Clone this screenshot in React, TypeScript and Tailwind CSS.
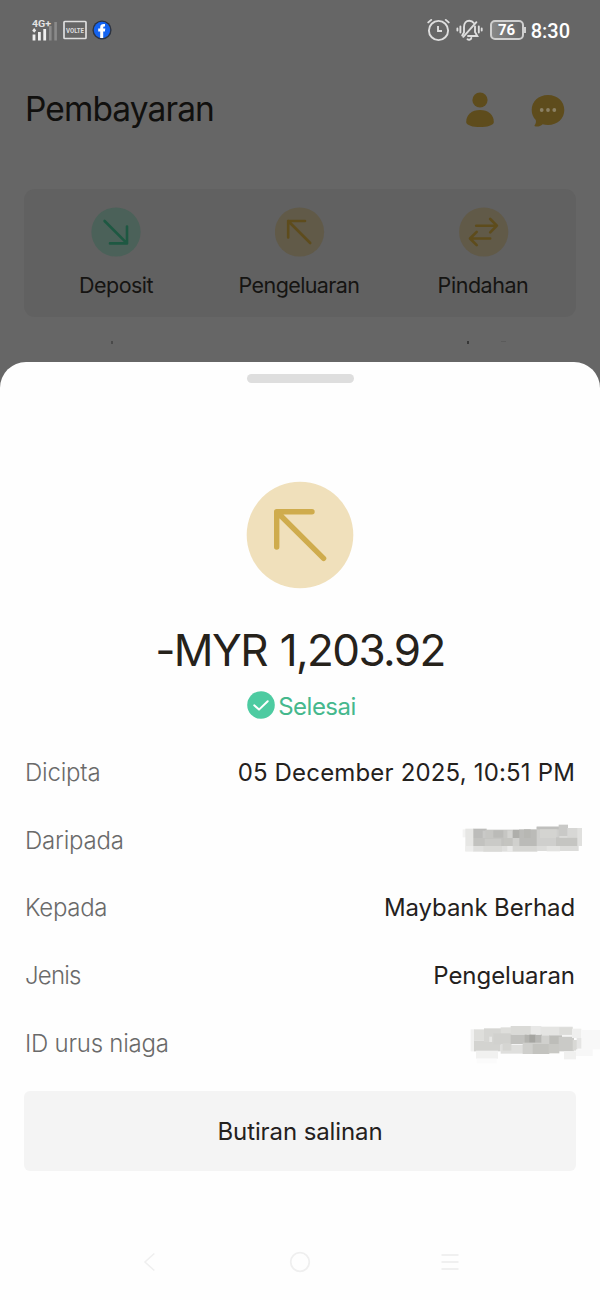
import React from 'react';

type Cell = [number, number, number, number, string];

interface MaskProps {
  cells: Cell[];
  height: number;
}

interface Detail {
  label: string;
  labelClass: string;
  value?: string;
  valueClass?: string;
  mask?: MaskProps;
}

// x, y, width, height, colour
const SENDER_CELLS: Cell[] = [
  [68, 58, 10, 24, '#f3f3f2'],
  [76, 56, 26, 68, '#e6e6e4'],
  [76, 108, 26, 16, '#ededec'],
  [100, 56, 40, 28, '#bcbcba'],
  [128, 62, 12, 22, '#c9c9c7'],
  [136, 59, 82, 26, '#c6c6c3'],
  [160, 61, 30, 22, '#bbbbb8'],
  [202, 61, 18, 24, '#d3d3d0'],
  [100, 84, 140, 24, '#c2c2bf'],
  [134, 86, 50, 22, '#cacac7'],
  [192, 84, 26, 24, '#c4c4c0'],
  [218, 84, 22, 24, '#d0d0cd'],
  [218, 59, 22, 25, '#afafab'],
  [238, 58, 54, 50, '#bbbbb8'],
  [252, 58, 20, 26, '#b7b7b3'],
  [100, 108, 118, 17, '#dfdfdd'],
  [130, 108, 56, 17, '#dadad7'],
  [202, 108, 16, 17, '#eaeae9'],
  [218, 108, 74, 17, '#d6d6d3'],
  [290, 50, 68, 60, '#cfcfcd'],
  [290, 50, 68, 8, '#bfbfbd'],
  [300, 58, 50, 26, '#d4d4d1'],
  [356, 44, 28, 36, '#c9c9c7'],
  [382, 54, 32, 28, '#d7d7d5'],
  [348, 82, 68, 26, '#c5c5c2'],
  [290, 108, 126, 15, '#dcdcda'],
  [320, 108, 40, 16, '#e3e3e1'],
  [412, 54, 14, 54, '#e0e0de'],
];

const ID_CELLS: Cell[] = [
  [92, 58, 12, 66, '#f1f1f0'],
  [102, 58, 32, 34, '#dededb'],
  [102, 92, 80, 32, '#d3d3d0'],
  [132, 55, 52, 42, '#d6d6d3'],
  [182, 52, 32, 26, '#dededb'],
  [148, 80, 8, 16, '#e8e8e6'],
  [160, 70, 54, 34, '#d1d1ce'],
  [212, 48, 62, 26, '#dadad7'],
  [272, 48, 32, 24, '#e8e8e7'],
  [302, 50, 96, 26, '#e4e4e2'],
  [358, 52, 40, 22, '#dcdcd9'],
  [182, 104, 90, 27, '#dfdfdd'],
  [188, 100, 26, 22, '#d5d5d2'],
  [212, 74, 48, 28, '#c1c1be'],
  [254, 74, 34, 26, '#b3b3af'],
  [268, 74, 18, 24, '#a5a5a1'],
  [286, 74, 20, 26, '#b7b7b4'],
  [304, 76, 26, 28, '#d0d0cd'],
  [328, 76, 38, 30, '#bdbdb9'],
  [248, 98, 58, 34, '#cfcfcc'],
  [278, 102, 50, 30, '#c3c3bf'],
  [326, 102, 32, 28, '#c8c8c4'],
  [356, 80, 46, 44, '#cacac7'],
  [398, 90, 14, 32, '#d8d8d5'],
  [396, 56, 28, 28, '#efefee'],
  [410, 84, 18, 32, '#e5e5e4'],
  [108, 122, 66, 24, '#f1f1f0'],
  [372, 124, 36, 24, '#f0f0ef'],
  [424, 60, 56, 58, '#f8f8f8'],
  [408, 118, 50, 20, '#f7f7f7'],
  [110, 146, 60, 14, '#fbfbfb'],
];

const DETAILS: Detail[] = [
  { label: 'Dicipta', labelClass: 'tracking-[-0.2px]', value: '05 December 2025, 10:51 PM', valueClass: 'tracking-[0.17px]' },
  { label: 'Daripada', labelClass: 'tracking-[-0.2px]', mask: { cells: SENDER_CELLS, height: 60 } },
  { label: 'Kepada', labelClass: 'tracking-[-0.3px]', value: 'Maybank Berhad', valueClass: 'tracking-[-0.1px]' },
  { label: 'Jenis', labelClass: 'tracking-[-0.8px]', value: 'Pengeluaran', valueClass: 'tracking-[-0.05px]' },
  { label: 'ID urus niaga', labelClass: 'tracking-[-0.25px]', mask: { cells: ID_CELLS, height: 66 } },
];

const Mask: React.FC<MaskProps> = ({ cells, height }) => (
  <svg width="160" height={height} viewBox={`0 0 480 ${height * 3}`} className="-mr-[25px] shrink-0">
    {cells.map(([x, y, w, h, fill], idx) => (
      <rect key={idx} x={x} y={y} width={w} height={h} fill={fill} />
    ))}
  </svg>
);

const StatusBar = () => (
  <div className="flex h-[60px] items-center justify-between pl-8 pr-[30px]">
    <div className="flex items-center">
      <svg width="26" height="24" viewBox="0 0 26 24" className="mr-[5px] overflow-visible">
        <text x="0" y="8.5" fontSize="9" fontWeight="700" fill="#e2e2e2" textLength="19" lengthAdjust="spacingAndGlyphs" className="font-['Roboto',sans-serif]">4G+</text>
        <path d="M0.2 12.6 L2.2 10 L4.2 12.6 L2.2 14.8Z" fill="#e8e8e8" />
        <rect x="0.6" y="16.5" width="2.8" height="6" fill="#f0f0f0" />
        <rect x="6" y="14" width="2.8" height="8.5" fill="#f0f0f0" />
        <rect x="11.3" y="11" width="2.8" height="11.5" fill="#f0f0f0" />
        <rect x="17" y="8" width="2.6" height="14.5" fill="#8a8a8a" />
        <rect x="22.3" y="4" width="2.6" height="18.5" fill="#8a8a8a" />
      </svg>
      <svg width="24" height="20" viewBox="0 0 24 20" className="mr-[6px] overflow-visible">
        <rect x="1" y="1.5" width="22" height="17" rx="0.8" fill="none" stroke="#dedede" strokeWidth="1.7" />
        <text x="3" y="13" fontSize="8" fontWeight="700" fill="#dedede" textLength="18" lengthAdjust="spacingAndGlyphs" className="font-['Roboto',sans-serif]">VOLTE</text>
      </svg>
      <svg width="20" height="20" viewBox="0 0 20 20" className="-ml-px">
        <circle cx="10" cy="10" r="9.6" fill="#2d3340" />
        <circle cx="10" cy="10" r="8.2" fill="#1463f0" />
        <path d="M8.2 18 V11.5 H6.2 V8.6 H8.2 V7.4 C8.2 4.8 9.6 3.8 13 4.1 V6.6 C11.6 6.5 11.2 6.8 11.2 7.8 V8.6 H13.3 L12.9 11.5 H11.2 V18Z" fill="#fff" />
      </svg>
    </div>
    <div className="flex items-center">
      <svg width="24" height="24" viewBox="0 0 24 24" fill="none" stroke="#dedede" strokeWidth="1.9" strokeLinecap="round" className="mr-[5px]">
        <circle cx="11.5" cy="12.5" r="9.6" />
        <path d="M11 8 V13 H15" strokeLinecap="butt" />
        <path d="M1.3 4.4 L4.2 1.9 M21.7 4.4 L18.8 1.9" />
      </svg>
      <svg width="28" height="24" viewBox="0 0 28 24" fill="none" stroke="#dedede" strokeWidth="1.9" strokeLinecap="round" className="mr-[6px]">
        <path d="M6.2 17.5 L8 14.5 V9 C8 5 10.3 2.7 13.3 2.7 C15.3 2.7 16.8 3.6 17.8 5" />
        <path d="M19 8.5 V14 L21.3 18 H12" />
        <path d="M20.4 4.2 L7.3 18.8" />
        <path d="M11.5 21.3 C13 22.3 15 21.6 15.3 20" />
        <path d="M4.4 8.5 V14.5 M1.4 10.5 V12.5 M22.8 8.5 V14.5 M25.7 10.5 V12.5" />
      </svg>
      <div className="flex h-5 w-[34px] items-center justify-center rounded-[5px] border-2 border-[#cfcfcf] bg-gradient-to-r from-[#888] to-[#666] font-['Roboto',sans-serif] text-[15px] font-bold leading-none text-white">76</div>
      <div className="mr-[5px] h-[6px] w-[2px] bg-[#cfcfcf]" />
      <span className="pt-px font-['Roboto',sans-serif] text-[20px] font-medium leading-none text-white">8:30</span>
    </div>
  </div>
);

const Header = () => (
  <div className="flex h-[100px] items-center justify-between pl-[25px] pr-[35px]">
    <h1 className="text-[33.5px] font-normal leading-none tracking-[-0.9px] text-[#11100e]">Pembayaran</h1>
    <div className="flex items-center gap-[36px]">
      <svg width="30" height="36" viewBox="0 0 30 36" fill="#5e4c1c">
        <circle cx="15" cy="8" r="7.6" />
        <path d="M1.2 30 C1.2 22.5 7 18 15 18 C23 18 28.8 22.5 28.8 30 C28.8 36.8 1.2 36.8 1.2 30Z" />
      </svg>
      <svg width="34" height="36" viewBox="0 0 34 36">
        <path d="M17 3 C26.5 3 33.3 9.5 33.3 18 C33.3 26.5 26.5 33 17 33 C15 33 13.3 32.7 11.7 32.2 C9.5 34.3 6.5 34.8 4 34.3 C3.3 34.1 3.3 33.6 3.8 33 C4.8 31.8 5.2 30 4.8 28 C2.2 25.5 0.7 22 0.7 18 C0.7 9.5 7.5 3 17 3Z" fill="#5e4c1c" />
        <g fill="#8b8064">
          <circle cx="10.7" cy="18" r="1.9" />
          <circle cx="17" cy="18" r="1.9" />
          <circle cx="23.3" cy="18" r="1.9" />
        </g>
      </svg>
    </div>
  </div>
);

const Actions = () => (
  <div className="mx-6 mt-[29px] grid h-[128px] grid-cols-3 rounded-[11px] bg-[#616161] pt-[18px] text-[21.5px] leading-none text-[#151412]">
    <div className="flex flex-col items-center gap-[17.5px]">
      <svg width="50" height="50" viewBox="0 0 50 50" fill="none" strokeWidth="2.6" strokeLinecap="round" strokeLinejoin="round">
        <circle cx="25" cy="25" r="24.6" fill="#4b6159" />
        <path d="M13.6 14 L36 36.4 M36 19.5 V36.4 H19" stroke="#1e5842" />
      </svg>
      <span className="tracking-[-0.55px]">Deposit</span>
    </div>
    <div className="flex flex-col items-center gap-[17.5px]">
      <svg width="50" height="50" viewBox="0 0 50 50" fill="none" strokeWidth="2.6" strokeLinecap="round" strokeLinejoin="round">
        <circle cx="24.5" cy="25" r="24.6" fill="#615a48" />
        <path d="M35.2 36 L13.2 14 M13.2 30.5 V14 H30" stroke="#5e4c1c" />
      </svg>
      <span className="-ml-0.5 tracking-[-0.6px]">Pengeluaran</span>
    </div>
    <div className="flex flex-col items-center gap-[17.5px]">
      <svg width="50" height="50" viewBox="0 0 50 50" fill="none" strokeWidth="2.6" strokeLinecap="round" strokeLinejoin="round">
        <circle cx="24.7" cy="25" r="24.6" fill="#615a48" />
        <path d="M17.2 18.7 H37.7 M31.2 12 L37.9 18.7 L31.2 25.4 M31.2 31.5 H11.2 M17.7 24.8 L11 31.5 L17.7 38.2" stroke="#5e4c1c" />
      </svg>
      <span className="-ml-0.5 tracking-[-0.45px]">Pindahan</span>
    </div>
  </div>
);

const NavBar = () => (
  <div className="mt-[80px] flex items-center justify-between px-[140px]">
    <svg width="20" height="22" viewBox="0 0 20 22" fill="none" stroke="#efefef" strokeWidth="1.6">
      <path d="M14.3 2.5 L5 11 L14.3 19.5" />
    </svg>
    <svg width="22" height="22" viewBox="0 0 22 22" fill="none" stroke="#efefef" strokeWidth="1.8">
      <circle cx="11" cy="11" r="9.3" />
    </svg>
    <svg width="20" height="22" viewBox="0 0 20 22" fill="none" stroke="#ececec" strokeWidth="1.6">
      <path d="M1.5 4 H18.5 M1.5 11 H18.5 M1.5 18 H18.5" />
    </svg>
  </div>
);

const App: React.FC = () => {
  return (
    <div className="flex h-[1300px] w-[600px] flex-col overflow-hidden bg-[#666] font-['Inter',sans-serif]">
      <StatusBar />
      <Header />
      <Actions />

      {/* Tops of the list rows hidden behind the sheet */}
      <div className="flex h-[45px] items-start pt-[24px]">
        <div className="ml-[111px] h-[3px] w-[2px] bg-[#4a4a4a]" />
        <div className="ml-[354px] h-[3px] w-[2px] bg-[#383838]" />
        <div className="ml-[32px] h-px w-[5px] bg-[#5b5b5b]" />
      </div>

      {/* Transaction sheet */}
      <div className="flex flex-1 flex-col rounded-t-[26px] bg-[#fefefe] pt-3">
        <div className="mx-auto h-[9px] w-[107px] shrink-0 rounded-full bg-[#dedede]" />

        <svg width="108" height="108" viewBox="0 0 108 108" fill="none" className="mx-auto mt-[98px] shrink-0">
          <circle cx="54" cy="54" r="53.3" fill="#f0e0bb" />
          <path d="M77.6 77.3 L31 31 M30.7 66 V30.7 H66" stroke="#cfac4d" strokeWidth="5.4" strokeLinecap="round" strokeLinejoin="round" />
        </svg>

        <div className="mt-[39px] h-11 text-center text-[44px] leading-[44px] tracking-[-1.6px] whitespace-nowrap text-[#26221b] [word-spacing:2px]">-MYR 1,203.92</div>

        <div className="mt-[19px] flex h-7 items-center justify-center gap-[3px] pl-[3px]">
          <svg width="28" height="28" viewBox="0 0 28 28" fill="none">
            <circle cx="14" cy="14" r="13.8" fill="#4dcba1" />
            <path d="M7.2 14.3 L12 18.6 L20.7 10.2" stroke="#fff" strokeWidth="2" strokeLinecap="round" strokeLinejoin="round" />
          </svg>
          <span className="pt-1 text-[24px] leading-7 tracking-[-0.5px] text-[#45b88d]">Selesai</span>
        </div>

        <div className="mt-[19px] px-[25px] text-[24px] leading-none">
          {DETAILS.map((row) => (
            <div key={row.label} className="flex h-[67.75px] items-center justify-between whitespace-nowrap">
              <span className={`pt-0.5 font-light text-[#6a6a6a] ${row.labelClass}`}>{row.label}</span>
              {row.mask ? <Mask {...row.mask} /> : <span className={`pt-0.5 text-[#24211d] ${row.valueClass}`}>{row.value}</span>}
            </div>
          ))}
        </div>

        <button className="mx-6 mt-[14px] h-20 shrink-0 rounded-[6px] bg-[#f4f4f4] pt-[3px] text-[24px] leading-none text-[#24211d]">
          <span className="tracking-[-0.1px]">Butiran salinan</span>
        </button>

        <NavBar />
      </div>
    </div>
  );
};

export default App;
